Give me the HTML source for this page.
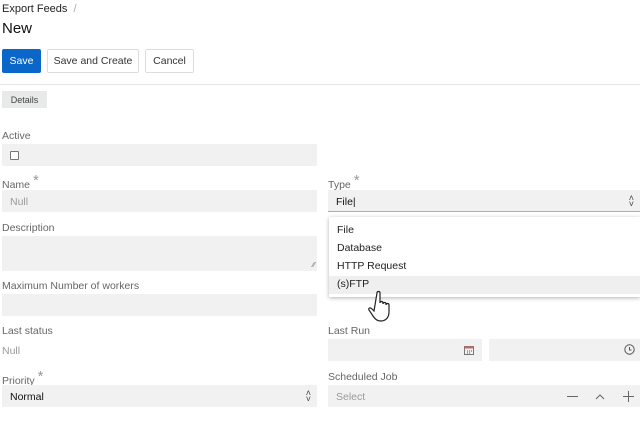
<!DOCTYPE html>
<html><head><meta charset="utf-8"><style>
*{margin:0;padding:0;box-sizing:border-box}
body{width:640px;height:423px;overflow:hidden;background:#fff;font-family:"Liberation Sans",Arial,sans-serif;color:#222;position:relative}
.a{position:absolute;white-space:nowrap}
.lbl{font-size:10.5px;color:#666}
.star{color:#999;font-size:15px;position:relative;top:-3px;margin-left:3px}
.inp{position:absolute;background:#f1f1f1;height:22px}
.btn{position:absolute;top:49px;height:24px;border:1px solid #ddd;border-radius:2px;font-size:10.5px;line-height:23px;text-align:center;background:#fff;color:#333}
.v{font-size:10.5px;position:absolute;top:6px;left:8px}
.arr{position:absolute;right:6px;top:5px;font-size:9px;color:#444;line-height:6px;text-align:center}
</style></head><body>
<div class="a" style="left:2px;top:3px;font-size:11px;color:#222">Export Feeds <span style="color:#aaa">&nbsp;/</span></div>
<div class="a" style="left:2px;top:20px;font-size:15px;color:#111">New</div>
<div class="btn" style="left:2px;width:39px;background:#0b66c9;border-color:#0b66c9;color:#fff">Save</div>
<div class="btn" style="left:47px;width:92px">Save and Create</div>
<div class="btn" style="left:145px;width:49px">Cancel</div>
<div class="a" style="left:0;top:84px;width:640px;height:1px;background:#e6e6e6"></div>
<div class="a" style="left:2px;top:91px;width:45px;height:17px;background:#e8e9e9;font-size:9px;color:#444;line-height:18px;text-align:center">Details</div>

<div class="a lbl" style="left:2px;top:130px">Active</div>
<div class="inp" style="left:2px;top:144px;width:315px"><div class="a" style="left:8px;top:7px;width:9px;height:9px;border:1px solid #777;border-radius:1px;background:#fff"></div></div>

<div class="a lbl" style="left:2px;top:175px">Name<span class="star">*</span></div>
<div class="inp" style="left:2px;top:190px;width:315px"><span class="v" style="color:#999">Null</span></div>

<div class="a lbl" style="left:328px;top:175px">Type<span class="star">*</span></div>
<div class="inp" style="left:328px;top:190px;width:312px;border-bottom:1px solid #8ab4e8"><span class="v" style="color:#111">File|</span><div class="arr">˄<br>˅</div></div>

<div class="a lbl" style="left:2px;top:222px">Description</div>
<div class="inp" style="left:2px;top:236px;width:315px;height:35px"><div class="a" style="right:2px;bottom:2px;font-size:7px;color:#666">⁄⁄</div></div>

<div class="a lbl" style="left:2px;top:280px">Maximum Number of workers</div>
<div class="inp" style="left:2px;top:294px;width:315px"></div>

<div class="a lbl" style="left:2px;top:325px">Last status</div>
<div class="a" style="left:2px;top:345px;font-size:10.5px;color:#999">Null</div>

<div class="a lbl" style="left:328px;top:325px">Last Run</div>
<div class="inp" style="left:328px;top:339px;width:154px"><svg class="a" style="right:8px;top:6px" width="10" height="10" viewBox="0 0 10 10"><rect x="0.5" y="1.5" width="9" height="8" fill="none" stroke="#777"/><rect x="0.5" y="1.5" width="9" height="2" fill="#c66"/><path d="M3 6h1M5 6h1M7 6h1M3 8h1M5 8h1" stroke="#555"/></svg></div>
<div class="inp" style="left:489px;top:339px;width:151px"><svg class="a" style="right:5px;top:5px" width="11" height="11" viewBox="0 0 11 11"><circle cx="5.5" cy="5.5" r="4.7" fill="none" stroke="#555"/><path d="M5.5 3v3h2" fill="none" stroke="#555"/></svg></div>

<div class="a lbl" style="left:2px;top:371px">Priority<span class="star">*</span></div>
<div class="inp" style="left:2px;top:385px;width:315px"><span class="v" style="color:#111">Normal</span><div class="arr">˄<br>˅</div></div>

<div class="a lbl" style="left:328px;top:371px">Scheduled Job</div>
<div class="inp" style="left:328px;top:385px;width:312px"><span class="v" style="color:#999">Select</span>
<svg class="a" style="left:239px;top:6px" width="72" height="11" viewBox="0 0 72 11"><path d="M0 5.5h11" stroke="#666"/><path d="M29 8l4-4 4 4" fill="none" stroke="#666"/><path d="M56 5.5h11M61.5 0v11" stroke="#666"/></svg></div>

<div class="a" style="left:329px;top:217px;width:311px;height:80px;background:#fff;box-shadow:0 1px 4px rgba(0,0,0,.3)">
<div class="a" style="left:0;top:59px;width:311px;height:18px;background:#efefef"></div>
<div class="a" style="left:8px;top:7px;font-size:10.5px">File</div>
<div class="a" style="left:8px;top:25px;font-size:10.5px">Database</div>
<div class="a" style="left:8px;top:43px;font-size:10.5px">HTTP Request</div>
<div class="a" style="left:8px;top:61px;font-size:10.5px">(s)FTP</div>
</div>
<svg class="a" style="left:368px;top:290px" width="28" height="34" viewBox="0 0 28 34"><path d="M9 3c0-2 3-2 3 0v10c0-2 3-2 3 0v1c0-2 3-2 3 0v1c0-2 3-2 3 0v7c0 5-3 9-8 9c-4 0-6-2-8-5l-4-6c-1-2 1-3 3-1l2 2z" fill="#fff" stroke="#222" stroke-width="1.2"/></svg>
</body></html>
